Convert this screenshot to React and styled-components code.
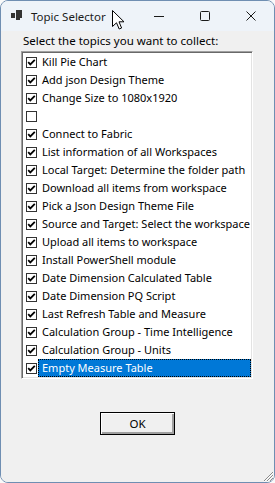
import React from 'react'
import styled, { createGlobalStyle } from 'styled-components'

const topics = [
  { label: 'Kill Pie Chart', checked: true },
  { label: 'Add json Design Theme', checked: true },
  { label: 'Change Size to 1080x1920', checked: true },
  { label: '', checked: false },
  { label: 'Connect to Fabric', checked: true },
  { label: 'List information of all Workspaces', checked: true },
  { label: 'Local Target: Determine the folder path', checked: true },
  { label: 'Download all items from workspace', checked: true },
  { label: 'Pick a Json Design Theme File', checked: true },
  { label: 'Source and Target: Select the workspace', checked: true },
  { label: 'Upload all items to workspace', checked: true },
  { label: 'Install PowerShell module', checked: true },
  { label: 'Date Dimension Calculated Table', checked: true },
  { label: 'Date Dimension PQ Script', checked: true },
  { label: 'Last Refresh Table and Measure', checked: true },
  { label: 'Calculation Group - Time Intelligence', checked: true },
  { label: 'Calculation Group - Units', checked: true },
  { label: 'Empty Measure Table', checked: true, selected: true },
]

const GlobalStyle = createGlobalStyle`
  html, body {
    margin: 0;
    padding: 0;
    background: #f9f9f9;
  }
  body {
    font-family: "Noto Sans", "Open Sans", sans-serif;
    font-size: 11px;
    color: #000;
  }
`

const AppIcon = () => (
  <svg width="16" height="16" viewBox="0 0 16 16">
    <rect x="8" y="4" width="6" height="8" fill="#333" />
    <rect x="3" y="7" width="4" height="5" fill="#333" />
    <rect x="8" y="12" width="4" height="2" fill="#333" />
  </svg>
)

const MinIcon = () => (
  <svg width="10" height="10" viewBox="0 0 10 10">
    <line x1="0" y1="5.5" x2="10" y2="5.5" stroke="#1a1a1a" strokeWidth="1" />
  </svg>
)

const MaxIcon = () => (
  <svg width="10" height="10" viewBox="0 0 10 10">
    <rect x="0.5" y="0.5" width="9" height="9" rx="1" fill="none" stroke="#1a1a1a" strokeWidth="1" />
  </svg>
)

const CloseIcon = () => (
  <svg width="10" height="10" viewBox="0 0 10 10">
    <path d="M0.5 0.5 L9.5 9.5 M9.5 0.5 L0.5 9.5" stroke="#1a1a1a" strokeWidth="1" />
  </svg>
)

const Cursor = () => (
  <svg width="13" height="20" viewBox="0 0 13 20">
    <path
      d="M0.5 0.5 L0.5 16.5 L4.5 12.8 L7.2 19 L9.6 18 L7 11.8 L12 11.8 Z"
      fill="#fff"
      stroke="#000"
      strokeWidth="1"
      strokeLinejoin="miter"
    />
  </svg>
)

const CheckMark = ({ checked }) => (
  <svg width="11" height="11" viewBox="0 0 11 11">
    <rect x="0.5" y="0.5" width="10" height="10" fill="#fff" stroke="#333" strokeWidth="1" />
    {checked && (
      <path d="M2.2 5.2 L4.3 7.4 L8.8 2.8" fill="none" stroke="#000" strokeWidth="1.8" />
    )}
  </svg>
)

const Grip = () => (
  <svg width="12" height="12" viewBox="0 0 12 12">
    <path
      d="M11 2 L2 11 M11 5 L5 11 M11 8 L8 11"
      stroke="#8a8a8a"
      strokeWidth="1"
    />
    <path
      d="M12 2 L2 12 M12 5 L5 12 M12 8 L8 12"
      stroke="#fff"
      strokeWidth="0.8"
    />
  </svg>
)

const App = () => {
  return (
    <>
      <GlobalStyle />
      <Window>
        <TitleBar>
          <TitleIcon>
            <AppIcon />
          </TitleIcon>
          <TitleText>Topic Selector</TitleText>
          <Controls>
            <ControlButton><MinIcon /></ControlButton>
            <ControlButton><MaxIcon /></ControlButton>
            <ControlButton><CloseIcon /></ControlButton>
          </Controls>
          <Pointer>
            <Cursor />
          </Pointer>
        </TitleBar>
        <Client>
          <Prompt>Select the topics you want to collect:</Prompt>
          <ListBox>
            {topics.map((t, i) => (
              <Row key={i}>
                <CheckCell>
                  <CheckMark checked={t.checked} />
                </CheckCell>
                <ItemText $selected={t.selected}>{t.label}</ItemText>
              </Row>
            ))}
          </ListBox>
          <ButtonRow>
            <OkButton>OK</OkButton>
          </ButtonRow>
          <GripCorner>
            <Grip />
          </GripCorner>
        </Client>
      </Window>
    </>
  )
}

const Window = styled.div`
  position: relative;
  width: 275px;
  height: 483px;
  box-sizing: border-box;
  border: 1px solid #6f8eb2;
  border-radius: 8px;
  overflow: hidden;
  display: flex;
  flex-direction: column;
  background: #f0f0f0;
`

const TitleBar = styled.div`
  position: relative;
  height: 30px;
  flex: none;
  display: flex;
  align-items: center;
  background: #eef3f9;
`

const TitleIcon = styled.div`
  width: 16px;
  height: 16px;
  margin-left: 7px;
  margin-top: -4px;
  display: flex;
`

const TitleText = styled.div`
  margin-left: 7px;
  font-size: 11.5px;
  color: #1b1b1b;
  white-space: nowrap;
`

const Controls = styled.div`
  margin-left: auto;
  display: flex;
  height: 100%;
`

const ControlButton = styled.div`
  width: 46px;
  height: 100%;
  display: flex;
  align-items: center;
  justify-content: center;
`

const Pointer = styled.div`
  position: absolute;
  left: 111px;
  top: 9px;
  width: 13px;
  height: 20px;
`

const Client = styled.div`
  position: relative;
  flex: 1;
  display: flex;
  flex-direction: column;
  background: #f0f0f0;
`

const Prompt = styled.div`
  margin: 2px 0 0 22px;
  height: 18px;
  font-size: 11.5px;
  line-height: 15px;
  white-space: nowrap;
`

const ListBox = styled.div`
  margin-left: 20px;
  width: 232px;
  height: 328px;
  box-sizing: border-box;
  background: #fff;
  border-top: 1px solid #a0a0a0;
  border-left: 1px solid #a0a0a0;
  border-right: 1px solid #fff;
  border-bottom: 1px solid #fff;
  box-shadow: inset 1px 1px 0 #696969, inset -1px -1px 0 #e3e3e3;
  padding: 1px;
  display: flex;
  flex-direction: column;
  overflow: hidden;
`

const Row = styled.div`
  height: 18px;
  flex: none;
  display: flex;
  align-items: center;
  min-width: 0;
`

const CheckCell = styled.div`
  width: 11px;
  height: 11px;
  flex: none;
  margin-left: 3px;
  margin-right: 1px;
  display: flex;
`

const ItemText = styled.div`
  flex: 1;
  min-width: 0;
  height: 18px;
  box-sizing: border-box;
  padding-left: 3px;
  line-height: 16px;
  white-space: nowrap;
  overflow: hidden;
  border: 1px dotted ${({ $selected }) => ($selected ? '#000' : 'transparent')};
  background: ${({ $selected }) => ($selected ? '#0078d7' : 'transparent')};
  color: ${({ $selected }) => ($selected ? '#fff' : '#000')};
`

const ButtonRow = styled.div`
  display: flex;
  justify-content: center;
  margin-top: 33px;
`

const OkButton = styled.button`
  width: 75px;
  height: 23px;
  padding: 0;
  box-sizing: border-box;
  border: 1px solid #000;
  background: #f0f0f0;
  box-shadow: inset 1px 1px 0 #fff, inset -2px -2px 0 #a0a0a0;
  font-family: "Noto Sans", "Open Sans", sans-serif;
  font-size: 11.5px;
  color: #000;
  line-height: 19px;
`

const GripCorner = styled.div`
  position: absolute;
  right: 0;
  bottom: 0;
  width: 12px;
  height: 12px;
`

export default App
